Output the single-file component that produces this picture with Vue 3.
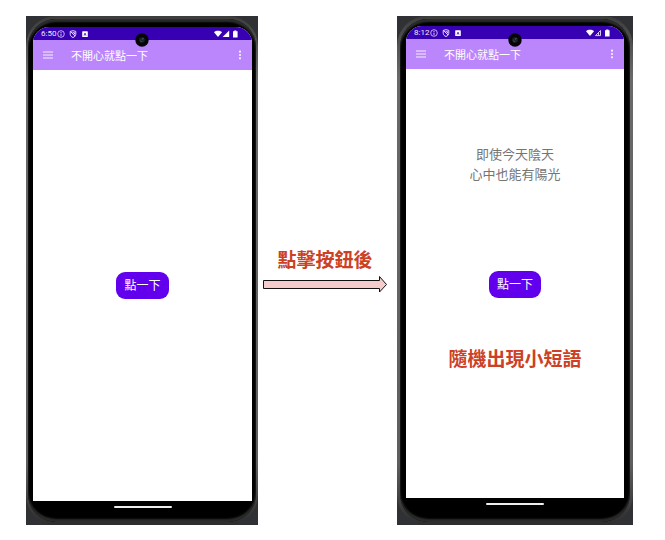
<script setup>
import { ref } from 'vue'

const phones = ref([
  { id: 'before', time: '6:50', signal: 'full', quote: [], note: '' },
  {
    id: 'after',
    time: '8:12',
    signal: 'outline',
    quote: ['即使今天陰天', '心中也能有陽光'],
    note: '隨機出現小短語',
  },
])
</script>

<template>
  <main class="board">
    <section v-for="phone in phones" :key="phone.id" class="frame" :class="phone.id">
      <div class="shell">
        <div class="bezel">
          <div class="screen">
            <div class="status">
              <span class="time">{{ phone.time }}</span>
              <svg class="glyph" viewBox="0 0 8 8" aria-hidden="true">
                <circle cx="4" cy="4" r="3.3" fill="none" stroke="#e4dcf6" stroke-width=".8" />
                <path d="M4 2v1M4 3.600v2.500" stroke="#e4dcf6" stroke-width=".9" />
              </svg>
              <svg class="glyph shield" viewBox="0 0 8 8" aria-hidden="true">
                <path d="M1.200 1.400 4 .7l2.800.7v2.800C6.800 5.800 5.500 7 4 7.500 2.500 7 1.200 5.800 1.200 4.200ZM1.500 1.500l4.600 4.600M3.500 2.700h2v1.600" fill="none" stroke="#f3effc" stroke-width=".9" />
              </svg>
              <svg class="glyph" viewBox="0 0 8 8" aria-hidden="true">
                <rect x="1.200" y="1.200" width="5.600" height="5.800" rx=".6" fill="#fff" />
                <path d="m3 5.500 1-2.500 1 2.500M3.400 4.800h1.200" fill="none" stroke="#3700b3" stroke-width=".7" />
              </svg>
              <svg class="radio" viewBox="0 0 24 8" aria-hidden="true">
                <path d="M0 2.200C2.200.4 5.800.4 8 2.200L4 7Z" fill="#fff" />
                <path v-if="phone.signal === 'full'" d="M15.200.6V7H8.600Z" fill="#fff" />
                <path v-else d="M14.500 1.500v5.100H9.500ZM12.500 4v2.500" fill="none" stroke="#e4dcf6" stroke-width=".9" />
                <path d="M19 1.200h1.200V.5h2.200v.7h1.200v6.200H19Z" fill="#fff" />
              </svg>
            </div>
            <header class="appbar">
              <button class="icon" type="button" aria-label="選單">
                <svg viewBox="0 0 10 8" width="10" height="8">
                  <path d="M0 1h10M0 4h10M0 7h10" stroke="#f6efff" stroke-width="1" />
                </svg>
              </button>
              <h1 class="title">不開心就點一下</h1>
              <button class="icon more" type="button" aria-label="更多">
                <svg viewBox="0 0 4 10" width="4" height="10">
                  <g fill="#f8f2ff">
                    <circle cx="2" cy="1.700" r="1.100" />
                    <circle cx="2" cy="5" r="1.100" />
                    <circle cx="2" cy="8.300" r="1.100" />
                  </g>
                </svg>
              </button>
            </header>
            <div class="content">
              <div class="quote">
                <p v-for="line in phone.quote" :key="line">{{ line }}</p>
              </div>
              <button class="tap" type="button">點一下</button>
              <div class="lower">
                <p v-if="phone.note" class="note">{{ phone.note }}</p>
              </div>
            </div>
          </div>
          <div class="nav"><span class="handle"></span></div>
          <svg class="camera" viewBox="0 0 14 14" aria-hidden="true">
            <circle cx="7" cy="7" r="6.700" fill="#050507" />
            <circle cx="7" cy="7" r="2.800" fill="#1b2329" />
            <path d="m5.500 8 1 .6M7.200 6.200l1.300-.8" stroke="#65717a" stroke-width=".9" />
          </svg>
        </div>
      </div>
    </section>

    <div class="step">
      <p class="note">點擊按鈕後</p>
      <svg class="arrow" viewBox="0 0 124 18" aria-hidden="true">
        <path d="M.5 5.500H116.500V1.500L123.500 9.500 116.500 17V13.500H.5Z" fill="#f4cccc" stroke="#111" stroke-width="1" />
      </svg>
    </div>
  </main>
</template>

<style>
body {
  margin: 0;
  background: #fff;
}
</style>

<style scoped>
.board {
  display: grid;
  grid-template-columns: 232fr 139fr 236fr;
  padding: 16px 32px 16px 26px;
  font-family: Roboto, "Noto Sans CJK TC", sans-serif;
}
p,
h1 {
  margin: 0;
}
button {
  border: 0;
  margin: 0;
  padding: 0;
  background: none;
  font: inherit;
}
.frame {
  grid-row: 1;
  background: #2f3135;
}
.before {
  grid-column: 1;
}
.after {
  grid-column: 3;
}
.shell {
  box-sizing: border-box;
  height: 100%;
  padding: 3px 2px;
  border-radius: 30px;
  background: linear-gradient(#3c3d3c, #686968 12%, #5d5e5d 88%, #2d2d2d);
}
.after .shell {
  padding: 3px;
}
.bezel {
  position: relative;
  box-sizing: border-box;
  height: 100%;
  padding: 8px 4px 0 5px;
  border-radius: 28px;
  background: #000;
  box-shadow: inset 0 3px 2px #2c2d2d, inset 0 -3px 2px #2c2d2d;
}
.after .bezel {
  padding: 7px 6px 0;
}
.screen {
  overflow: hidden;
  border-radius: 16px 16px 0 0;
  background: #fff;
}
.status {
  display: flex;
  align-items: center;
  gap: 4px;
  height: 13px;
  padding: 0 14px 0 8px;
  background: #3700b3;
  color: #f1ecfb;
}
.time {
  margin-right: -3px;
  font-size: 8px;
  line-height: 13px;
}
.glyph {
  width: 8px;
  height: 8px;
}
.radio {
  width: 24px;
  height: 8px;
  margin-left: auto;
}
.appbar {
  display: flex;
  align-items: center;
  height: 30px;
  padding: 0 10px;
  background: #bb86fc;
  color: #fff;
}
.icon {
  display: flex;
}
.title {
  flex: 1;
  margin-left: 18px;
  padding-top: 3px;
  font-size: 11px;
  font-weight: 400;
  line-height: 27px;
}
.content {
  display: flex;
  flex-direction: column;
  align-items: center;
  padding-top: 76px;
  color: #757575;
}
.quote {
  min-height: 126px;
  font-size: 13px;
  line-height: 20px;
  text-align: center;
}
.tap {
  height: 27px;
  padding: 2px 8px 0;
  border-radius: 9px;
  background: #6200ee;
  color: #fff;
  font-size: 12px;
  line-height: 25px;
}
.lower {
  box-sizing: border-box;
  min-height: 202px;
  padding-top: 48px;
}
.after .lower {
  min-height: 200px;
}
.note {
  color: #cc4125;
  font-size: 19px;
  font-weight: 700;
  line-height: 28px;
  white-space: nowrap;
}
.nav {
  box-sizing: border-box;
  display: flex;
  justify-content: center;
  height: 21px;
  padding-top: 5px;
}
.handle {
  width: 58px;
  height: 2px;
  border-radius: 1px;
  background: #eee;
}
.camera {
  position: absolute;
  top: 14px;
  left: calc(50% - 7px);
  width: 14px;
  height: 14px;
}
.step {
  grid-column: 2;
  grid-row: 1;
  display: flex;
  flex-direction: column;
  align-items: center;
  padding: 231px 10px 0 5px;
}
.arrow {
  width: 100%;
}
</style>
